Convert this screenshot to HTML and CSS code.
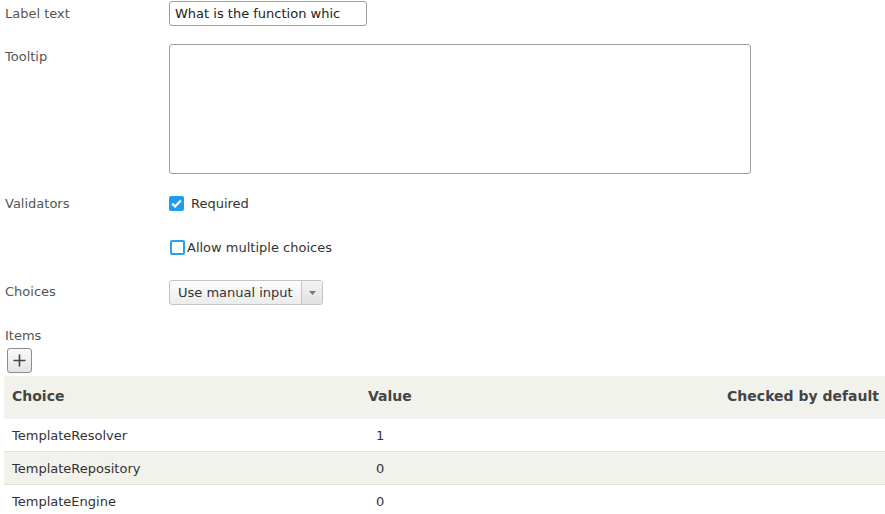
FILE: index.html
```html
<!DOCTYPE html>
<html>
<head>
<meta charset="utf-8">
<link rel="stylesheet" href="styles.css">
</head>
<body>
<div class="form">
  <div class="row row-label">
    <div class="label">Label text</div>
    <div class="field"><div class="input">What is the function whic</div></div>
  </div>
  <div class="row row-tooltip">
    <div class="label">Tooltip</div>
    <div class="field"><div class="textarea"></div></div>
  </div>
  <div class="row row-check">
    <div class="label">Validators</div>
    <div class="field check-line">
      <span class="cb cb-on"><svg width="11" height="9" viewBox="0 0 11 9"><path d="M1.2 4.6 L4.2 7.4 L9.8 1.4" fill="none" stroke="#fff" stroke-width="2.2"/></svg></span>
      <span class="check-text">Required</span>
    </div>
  </div>
  <div class="row row-check2">
    <div class="label"></div>
    <div class="field check-line">
      <span class="cb cb-off"></span>
      <span class="check-text tight">Allow multiple choices</span>
    </div>
  </div>
  <div class="row row-choices">
    <div class="label">Choices</div>
    <div class="field">
      <div class="select"><span class="select-text">Use manual input</span><span class="select-arrow"><svg width="7" height="4" viewBox="0 0 7 4"><path d="M0 0 H7 L3.5 4 Z" fill="#777"/></svg></span></div>
    </div>
  </div>
  <div class="items-label">Items</div>
  <div class="add-btn"><svg width="13" height="13" viewBox="0 0 13 13"><path d="M6.5 0.5 V12.5 M0.5 6.5 H12.5" stroke="#444" stroke-width="1.6"/></svg></div>
  <table class="grid">
    <thead>
      <tr><th class="c1">Choice</th><th class="c2">Value</th><th class="c3">Checked by default</th></tr>
    </thead>
    <tbody>
      <tr><td class="c1">TemplateResolver</td><td class="c2">1</td><td class="c3"></td></tr>
      <tr class="alt"><td class="c1">TemplateRepository</td><td class="c2">0</td><td class="c3"></td></tr>
      <tr><td class="c1">TemplateEngine</td><td class="c2">0</td><td class="c3"></td></tr>
    </tbody>
  </table>
</div>
</body>
</html>
```
FILE: styles.css
```css
html, body { margin: 0; padding: 0; background: #fff; }
body { font-family: "DejaVu Sans", Verdana, sans-serif; font-size: 13px; color: #333; overflow: hidden; }
.form { padding-left: 5px; padding-top: 1px; }
.row { display: flex; align-items: flex-start; }
.label { width: 164px; flex: none; color: #555; line-height: 16px; }
.field { flex: none; }
.row-label .label { padding-top: 5px; }
.input { width: 187px; height: 23px; border: 1px solid #9a9fa4; border-radius: 3px; padding: 0 4px 0 5px; line-height: 23px; color: #222; font-size: 13px; box-sizing: content-box; }
.row-tooltip { margin-top: 18px; }
.row-tooltip .label { padding-top: 5px; }
.textarea { width: 580px; height: 128px; border: 1px solid #9a9fa4; border-radius: 3px; }
.row-check { margin-top: 21px; height: 16px; }
.row-check .label { padding-top: 1px; }
.row-check2 { margin-top: 28px; height: 16px; }
.check-line { display: flex; align-items: center; height: 16px; }
.cb { display: inline-flex; align-items: center; justify-content: center; width: 15px; height: 15px; box-sizing: border-box; border-radius: 2px; }
.cb-on { background: #1e9cf0; margin-left: 0; }
.cb-off { border: 2px solid #2a9ff0; margin-left: 1px; border-radius: 2px; }
.check-text { margin-left: 7px; color: #333; }
.check-text.tight { margin-left: 2px; }
.row-choices { margin-top: 25px; }
.row-choices .label { padding-top: 4px; }
.select { display: flex; height: 23px; border: 1px solid #c4c4c4; border-radius: 3px; background: linear-gradient(#fdfdfd, #ececec); width: 152px; }
.select-text { flex: 1; padding-left: 8px; line-height: 23px; color: #333; }
.select-arrow { width: 20px; border-left: 1px solid #c4c4c4; display: flex; align-items: center; justify-content: center; background: linear-gradient(#f4f4f4, #e0e0e0); border-radius: 0 3px 3px 0; }
.items-label { margin-top: 23px; color: #555; line-height: 16px; }
.add-btn { margin-top: 4px; margin-left: 2px; width: 23px; height: 23px; border: 1px solid #8d8d8d; border-radius: 3px; background: linear-gradient(#fbfbfb, #e4e4e4); display: flex; align-items: center; justify-content: center; }
.grid { margin-top: 3px; margin-left: -1px; width: 881px; border-collapse: collapse; }
.grid th { background: #f2f2ec; height: 43px; padding: 0 0 3px; box-sizing: border-box; font-size: 14px; font-weight: bold; color: #444; text-align: left; }
.grid td { height: 32px; padding: 0; border-bottom: 1px solid #e2e2da; color: #333; }
.grid tbody tr:last-child td { border-bottom: none; }
.grid tr.alt td { background: #f2f2ec; }
.grid .c1 { padding-left: 8px; width: 356px; }
.grid td.c2 { padding-left: 8px; }
.grid .c3 { text-align: right; padding-right: 6px; }
```
